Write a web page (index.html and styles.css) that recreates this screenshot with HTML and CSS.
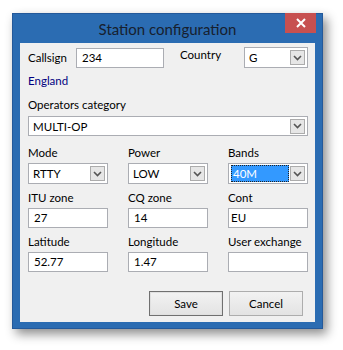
FILE: index.html
```html
<!DOCTYPE html>
<html>
	<head>
		<meta charset="utf-8">
		<title>Station configuration</title>
		<link rel="stylesheet" href="styles.css">
	</head>
	<body>
		<div class="window">
			<div class="titlebar">
				<span class="title">Station configuration</span>
				<span class="close">
					<svg width="10" height="10" viewBox="0 0 10 10"><path d="M1 1 L9 9 M9 1 L1 9" stroke="#fff" stroke-width="2"/></svg>
				</span>
			</div>
			<div class="client">
				<div class="toprow">
					<span class="lbl callsign">Callsign</span>
					<div class="field w88">234</div>
					<span class="lbl country">Country</span>
					<div class="combo w64">
						<span class="val">G</span>
						<span class="drop"><svg width="9" height="6" viewBox="0 0 9 6"><path d="M1 1 L4.5 4.5 L8 1" fill="none" stroke="#555" stroke-width="1.6"/></svg></span>
					</div>
				</div>
				<div class="england">England</div>
				<div class="lbl opcat">Operators category</div>
				<div class="combo full">
					<span class="val">MULTI-OP</span>
					<span class="drop"><svg width="9" height="6" viewBox="0 0 9 6"><path d="M1 1 L4.5 4.5 L8 1" fill="none" stroke="#555" stroke-width="1.6"/></svg></span>
				</div>
				<div class="grid">
					<span class="lbl">Mode</span>
					<span class="lbl">Power</span>
					<span class="lbl">Bands</span>

					<div class="combo">
						<span class="val">RTTY</span>
						<span class="drop"><svg width="9" height="6" viewBox="0 0 9 6"><path d="M1 1 L4.5 4.5 L8 1" fill="none" stroke="#555" stroke-width="1.6"/></svg></span>
					</div>
					<div class="combo">
						<span class="val">LOW</span>
						<span class="drop"><svg width="9" height="6" viewBox="0 0 9 6"><path d="M1 1 L4.5 4.5 L8 1" fill="none" stroke="#555" stroke-width="1.6"/></svg></span>
					</div>
					<div class="combo">
						<span class="val selected">40M</span>
						<span class="drop"><svg width="9" height="6" viewBox="0 0 9 6"><path d="M1 1 L4.5 4.5 L8 1" fill="none" stroke="#555" stroke-width="1.6"/></svg></span>
					</div>

					<span class="lbl">ITU zone</span>
					<span class="lbl">CQ zone</span>
					<span class="lbl">Cont</span>

					<div class="field pad">27</div>
					<div class="field pad">14</div>
					<div class="field">EU</div>

					<span class="lbl">Latitude</span>
					<span class="lbl">Longitude</span>
					<span class="lbl">User exchange</span>

					<div class="field pad">52.77</div>
					<div class="field pad">1.47</div>
					<div class="field"></div>
				</div>
				<div class="buttons">
					<button class="btn default">Save</button>
					<button class="btn">Cancel</button>
				</div>
			</div>
		</div>
	</body>
</html>
```
FILE: styles.css
```css
* {
	margin: 0;
	padding: 0;
	box-sizing: border-box;
}
body {
	width: 343px;
	height: 350px;
	background: #fff;
	padding: 13px 0 0 12px;
	font-family: Lato, "Noto Sans", sans-serif;
	font-size: 11.5px;
	color: #000;
}
.window {
	width: 311px;
	height: 316px;
	background: #2b6cb2;
	border: 1px solid #24599a;
	box-shadow: 4px 5px 10px rgba(0, 0, 0, 0.45);
	display: flex;
	flex-direction: column;
}
.titlebar {
	height: 29px;
	position: relative;
	display: flex;
	justify-content: center;
	align-items: center;
}
.title {
	font-size: 15px;
	color: #17202e;
	padding-top: 1px;
}
.close {
	position: absolute;
	right: 6px;
	top: -1px;
	width: 31px;
	height: 20px;
	background: #c75050;
	display: flex;
	align-items: center;
	justify-content: center;
}
.client {
	margin: 0 7px 6px 7px;
	flex: 1;
	background: #f0f0f0;
	padding: 4px 7px 0 8px;
}
.lbl {
	display: block;
	height: 16px;
	line-height: 16px;
	white-space: nowrap;
}
.toprow {
	display: flex;
	align-items: center;
	height: 21px;
}
.callsign {
	width: 48px;
}
.country {
	width: 64px;
	margin-left: 16px;
	padding-bottom: 4px;
	height: 21px;
}
.field {
	height: 20px;
	background: #fff;
	border: 1px solid #abadb3;
	line-height: 18px;
	padding-left: 2px;
}
.field.pad {
	padding-left: 5px;
}
.w88 {
	width: 88px;
	padding-left: 5px;
}
.w64 {
	width: 64px;
}
.combo {
	height: 21px;
	background: #fff;
	border: 1px solid #abadb3;
	display: flex;
	align-items: center;
	padding: 2px;
}
.combo .val {
	flex: 1;
	height: 17px;
	line-height: 17px;
	padding-left: 2px;
}
.combo .val.selected {
	background: #3399ff;
	color: #fff;
	outline: 1px dotted #222;
	outline-offset: -1px;
	margin-right: 1px;
}
.drop {
	width: 15px;
	height: 15px;
	background: #e6e6e6;
	border: 1px solid #acacac;
	display: flex;
	align-items: center;
	justify-content: center;
}
.england {
	color: #000080;
	height: 15px;
	line-height: 15px;
	margin-top: 5px;
}
.opcat {
	margin-top: 9px;
	margin-bottom: 3px;
}
.combo.full {
	width: 280px;
	height: 20px;
}
.grid {
	display: grid;
	grid-template-columns: 80px 80px 80px;
	column-gap: 20px;
	margin-top: 9px;
}
.grid .lbl {
	margin-bottom: 2px;
}
.grid .combo, .grid .field {
	margin-bottom: 6px;
}
.buttons {
	display: flex;
	justify-content: flex-end;
	gap: 6px;
	margin-top: 13px;
	padding-right: 5px;
}
.btn {
	width: 74px;
	height: 25px;
	font-family: inherit;
	font-size: 11.5px;
	background: linear-gradient(#f2f2f2, #e3e3e3);
	border: 1px solid #adadad;
	color: #000;
}
.btn.default {
	border: 1px solid #707070;
	box-shadow: inset 0 0 0 1px #e0e0e0;
}
```
